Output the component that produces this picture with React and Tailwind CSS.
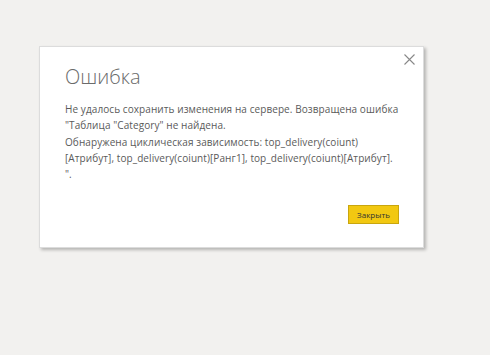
export default function App() {
  return (
    <div className="w-[490px] h-[355px] bg-[#f2f1ef] pt-[46px] pl-[39px]">
      <div className="relative w-[385px] h-[202px] bg-white border border-[#dcdcdc] shadow-[2px_2px_3px_rgba(0,0,0,0.25)] pl-[25px] pr-[10px] pt-[16px] font-['Open_Sans',sans-serif]">
        <button className="absolute right-[8px] top-[6px] w-[12px] h-[12px] flex items-center justify-center">
          <svg width="11" height="11" viewBox="0 0 11 11">
            <path d="M0.5 0.5 L10.5 10.5 M10.5 0.5 L0.5 10.5" stroke="#888" strokeWidth="1.1" fill="none" />
          </svg>
        </button>
        <div className="text-[20px] leading-[28px] font-light text-[#6b6b6b]">Ошибка</div>
        <div className="mt-[10px] text-[10px] leading-[16.3px] text-[#5a5a5a] tracking-[0.08px]">
          <div>Не удалось сохранить изменения на сервере. Возвращена ошибка</div>
          <div>"Таблица "Category" не найдена.</div>
          <div>Обнаружена циклическая зависимость: top_delivery(coiunt)</div>
          <div>[Атрибут], top_delivery(coiunt)[Ранг1], top_delivery(coiunt)[Атрибут].</div>
          <div>".</div>
        </div>
        <div className="absolute left-[308px] top-[158px] w-[51px] h-[19px] bg-[#f2c811] border border-[#c9a60e] flex items-center justify-center text-[8px] text-[#333]">
          Закрыть
        </div>
      </div>
    </div>
  );
}
